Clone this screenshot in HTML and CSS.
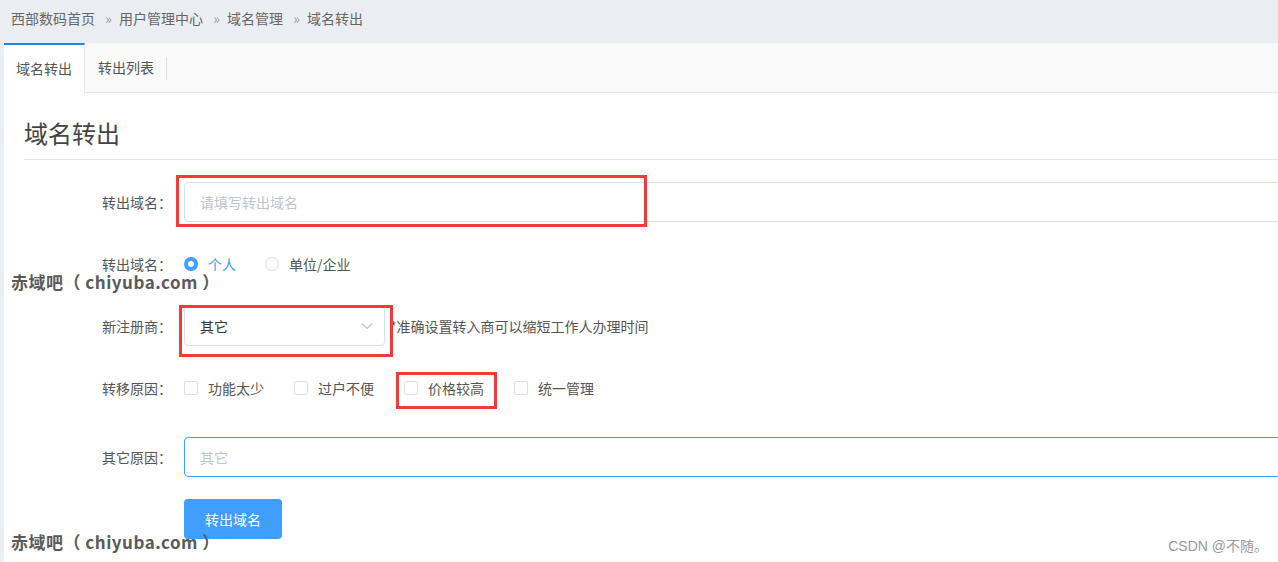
FILE: index.html
```html
<!DOCTYPE html>
<html lang="zh-CN">
<head>
  <meta charset="UTF-8" />
  <meta name="viewport" content="width=device-width, initial-scale=1.0" />
  <title>域名转出</title>
  <link rel="stylesheet" href="styles.css">
</head>
<body>
  <nav class="crumbs">
    <a href="#">西部数码首页</a>
    <span class="sep">»</span>
    <a href="#">用户管理中心</a>
    <span class="sep">»</span>
    <a href="#">域名管理</a>
    <span class="sep">»</span>
    <span>域名转出</span>
  </nav>

  <div class="panel">
    <ul class="tabs">
      <li class="tab active">域名转出</li>
      <li class="tab">转出列表</li>
    </ul>

    <section class="content">
      <h2 class="title">域名转出</h2>

      <form class="form">
        <div class="row">
          <label class="label">转出域名：</label>
          <div class="field">
            <input class="input" type="text" placeholder="请填写转出域名" />
            <span class="mark mark-domain"></span>
          </div>
        </div>

        <div class="row">
          <label class="label">转出域名：</label>
          <div class="field options">
            <span class="radio checked"><i></i>个人</span>
            <span class="radio"><i></i>单位/企业</span>
          </div>
        </div>

        <div class="row">
          <label class="label">新注册商：</label>
          <div class="field inline">
            <div class="select">
              <span>其它</span>
              <svg class="chevron" width="12" height="8" viewBox="0 0 12 8"><path d="M1 1.5 L6 6.5 L11 1.5" fill="none" stroke="#c0c4cc" stroke-width="1.2"/></svg>
              <span class="mark mark-select"></span>
            </div>
            <span class="hint">*准确设置转入商可以缩短工作人办理时间</span>
          </div>
        </div>

        <div class="row row-check">
          <label class="label">转移原因：</label>
          <div class="field options">
            <span class="check"><i></i>功能太少</span>
            <span class="check"><i></i>过户不便</span>
            <span class="check"><i></i>价格较高<span class="mark mark-check"></span></span>
            <span class="check"><i></i>统一管理</span>
          </div>
        </div>

        <div class="row">
          <label class="label">其它原因：</label>
          <div class="field">
            <input class="input focus" type="text" placeholder="其它" />
          </div>
        </div>

        <div class="row">
          <span class="label"></span>
          <div class="field">
            <button type="button" class="btn">转出域名</button>
          </div>
        </div>
      </form>
    </section>
  </div>

  <div class="watermark wm-top">赤域吧（ chiyuba.com ）</div>
  <div class="watermark wm-bottom">赤域吧（ chiyuba.com ）</div>
  <div class="credit">CSDN @不随。</div>
</body>
</html>
```

FILE: styles.css
```css
/* Base */
:root {
  --page-bg: #eaedf1;
  --blue: #409eff;
  --tab-blue: #1e88e5;
  --border: #dcdfe6;
  --text: #555;
  --muted: #c0c4cc;
  --mark: #f23a3a;
}
body {
  margin: 0;
  background-color: var(--page-bg);
  font-family: "Microsoft YaHei", "Noto Sans CJK SC", sans-serif;
  font-size: 14px;
  line-height: 1.3;
  color: var(--text);
  overflow: hidden;
  height: 562px;
  position: relative;
}
/* Breadcrumb */
.crumbs {
  height: 43px;
  line-height: 36px;
  padding-left: 11px;
  color: #666;
}
.crumbs a {
  color: #666;
  text-decoration: none;
}
.crumbs .sep {
  color: #999;
  margin: 0 4px 0 7px;
}
/* Panel & tabs */
.panel {
  margin-left: 4px;
  width: 1400px;
  background: #fff;
  height: 519px;
}
.tabs {
  list-style: none;
  margin: 0;
  padding: 0;
  display: flex;
  height: 49px;
  background: #f9f9f9;
  border-bottom: 1px solid #e6e6e6;
}
.tab {
  height: 48px;
  line-height: 48px;
  padding: 0 13px;
  color: #555;
  position: relative;
}
.tab.active {
  width: 81px;
  box-sizing: border-box;
  padding: 0;
  text-align: center;
  background: #fff;
  border-top: 2px solid var(--tab-blue);
  border-right: 1px solid #e6e6e6;
  height: 50px;
  line-height: 46px;
}
.tab + .tab::after {
  content: "";
  position: absolute;
  right: 0;
  top: 14px;
  height: 23px;
  border-right: 1px solid #ddd;
}
/* Content */
.content {
  padding: 0 0 0 20px;
}
.title {
  margin: 0;
  padding: 22px 0 0 0;
  height: 44px;
  font-size: 24px;
  font-weight: normal;
  color: #444;
  border-bottom: 1px solid #e4e4e4;
  line-height: 36px;
}
.form {
  padding-top: 22px;
}
.row {
  display: flex;
  align-items: center;
  min-height: 40px;
  margin-bottom: 22px;
  line-height: 16px;
}
.row-check {
  margin-bottom: 29px;
}
.label {
  width: 148px;
  padding-right: 12px;
  text-align: right;
  color: #555;
  flex-shrink: 0;
}
.field {
  position: relative;
  display: flex;
  align-items: center;
}
.input {
  width: 1100px;
  height: 40px;
  box-sizing: border-box;
  border: 1px solid var(--border);
  border-radius: 4px;
  padding: 0 15px;
  font-family: inherit;
  font-size: 14px;
  color: #555;
  outline: none;
}
.input::placeholder {
  color: var(--muted);
}
.input.focus {
  border-color: var(--blue);
}
/* Radio & checkbox */
.radio,
.check {
  display: inline-flex;
  align-items: center;
  position: relative;
  color: #555;
}
.radio {
  margin-right: 29px;
}
.radio i {
  width: 14px;
  height: 14px;
  box-sizing: border-box;
  border: 1px solid var(--border);
  border-radius: 50%;
  margin-right: 10px;
}
.radio.checked {
  color: var(--blue);
}
.radio.checked i {
  border: 4px solid var(--blue);
  background: #fff;
}
.check {
  margin-right: 30px;
}
.check i {
  width: 14px;
  height: 14px;
  box-sizing: border-box;
  border: 1px solid var(--border);
  border-radius: 2px;
  margin-right: 10px;
}
/* Select */
.inline {
  gap: 5px;
}
.select {
  position: relative;
  width: 201px;
  height: 40px;
  box-sizing: border-box;
  border: 1px solid var(--border);
  border-radius: 4px;
  padding: 0 11px 0 15px;
  display: flex;
  align-items: center;
  justify-content: space-between;
  color: #333;
}
.hint {
  color: #555;
}
/* Button */
.btn {
  width: 98px;
  height: 40px;
  border: none;
  border-radius: 4px;
  background: var(--blue);
  color: #fff;
  font-family: inherit;
  font-size: 14px;
  cursor: pointer;
}
/* Red annotation boxes */
.mark {
  position: absolute;
  border: 3px solid var(--mark);
  box-sizing: border-box;
  pointer-events: none;
}
.mark-domain {
  left: -8px;
  top: -7px;
  width: 471px;
  height: 52px;
}
.mark-select {
  left: -6px;
  top: -2px;
  width: 214px;
  height: 52px;
}
.mark-check {
  left: -8px;
  top: -8px;
  width: 101px;
  height: 37px;
}
/* Overlays */
.watermark {
  position: absolute;
  left: 11px;
  font-family: "Microsoft YaHei", "Noto Sans CJK SC", sans-serif;
  font-size: 17px;
  line-height: 16px;
  letter-spacing: 0.5px;
  font-weight: bold;
  color: #5a5a5a;
}
.wm-top {
  top: 274px;
}
.wm-bottom {
  top: 534px;
}
.credit {
  position: absolute;
  right: 10px;
  bottom: 7px;
  font-family: "Liberation Sans", "Noto Sans CJK SC", sans-serif;
  font-size: 14px;
  color: #999;
}
```
